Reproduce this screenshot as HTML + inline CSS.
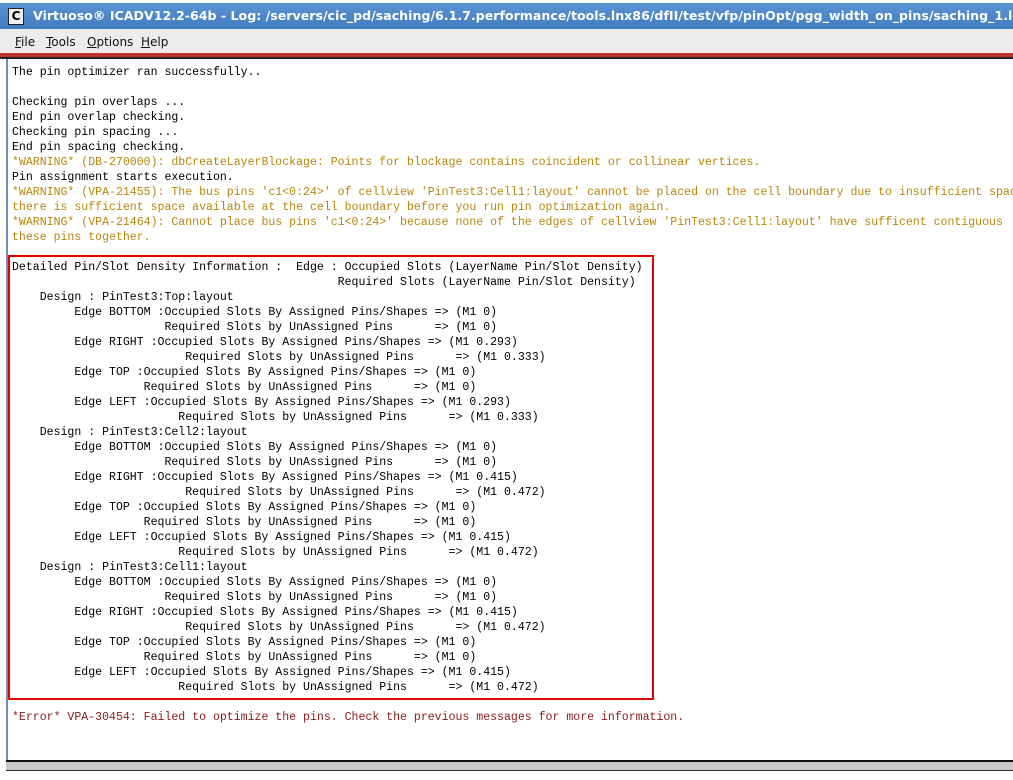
<!DOCTYPE html>
<html><head><meta charset="utf-8"><style>
html,body{margin:0;padding:0;width:1013px;height:780px;overflow:hidden;background:#fff;position:relative}
.title{position:absolute;left:0;top:3px;width:1013px;height:26px;background:linear-gradient(#5b94d2,#3f7cc0);color:#fff;font:bold 12.6px "DejaVu Sans",sans-serif;line-height:26px;white-space:nowrap;overflow:hidden}
.title .ic{position:absolute;left:8px;top:5px;width:14px;height:15px;background:#eee;border:1px solid #222;color:#000;font:bold 12px "DejaVu Sans",sans-serif;line-height:15px;text-align:center}
.title .t{position:absolute;left:33px;top:0}
.menu{position:absolute;left:0;top:29px;width:1013px;height:24px;background:#ececec;font:12px "DejaVu Sans",sans-serif;line-height:26px;color:#111}
.menu span{position:absolute;top:0}
.menu u{text-decoration:underline}
.red{position:absolute;left:0;top:53px;width:1013px;height:4px;background:#c0332a}
.blk{position:absolute;left:0;top:57px;width:1013px;height:2px;background:#222}
.lb{position:absolute;left:6px;top:59px;width:2px;height:702px;background:#6d8fb5}
.bot1{position:absolute;left:6px;top:760px;width:1007px;height:2px;background:#111}
.bot2{position:absolute;left:6px;top:762px;width:1007px;height:8px;background:#c8c8c8;border-bottom:1px solid #333}
pre{position:absolute;left:12px;top:65px;margin:0;font:11.55px "Liberation Mono",monospace;line-height:15px;white-space:pre;color:#000}
.w{color:#b8860b}.e{color:#8b1a1a}
.box{position:absolute;left:8px;top:255px;width:642px;height:441px;border:2px solid #e00000}
</style></head><body>
<div class="title"><div class="ic">C</div><div class="t">Virtuoso® ICADV12.2-64b - Log: /servers/cic_pd/saching/6.1.7.performance/tools.lnx86/dfII/test/vfp/pinOpt/pgg_width_on_pins/saching_1.log</div></div>
<div class="menu"><span style="left:15px"><u>F</u>ile</span><span style="left:46px"><u>T</u>ools</span><span style="left:87px"><u>O</u>ptions</span><span style="left:141px"><u>H</u>elp</span></div>
<div class="red"></div><div class="blk"></div><div class="lb"></div>
<div class="box"></div>
<pre>The pin optimizer ran successfully..

Checking pin overlaps ...
End pin overlap checking.
Checking pin spacing ...
End pin spacing checking.
<span class="w">*WARNING* (DB-270000): dbCreateLayerBlockage: Points for blockage contains coincident or collinear vertices.</span>
Pin assignment starts execution.
<span class="w">*WARNING* (VPA-21455): The bus pins 'c1&lt;0:24&gt;' of cellview 'PinTest3:Cell1:layout' cannot be placed on the cell boundary due to insufficient space
there is sufficient space available at the cell boundary before you run pin optimization again.
*WARNING* (VPA-21464): Cannot place bus pins 'c1&lt;0:24&gt;' because none of the edges of cellview 'PinTest3:Cell1:layout' have sufficent contiguous
these pins together.</span>

Detailed Pin/Slot Density Information :  Edge : Occupied Slots (LayerName Pin/Slot Density)
                                               Required Slots (LayerName Pin/Slot Density)
    Design : PinTest3:Top:layout
         Edge BOTTOM :Occupied Slots By Assigned Pins/Shapes =&gt; (M1 0)
                      Required Slots by UnAssigned Pins      =&gt; (M1 0)
         Edge RIGHT :Occupied Slots By Assigned Pins/Shapes =&gt; (M1 0.293)
                         Required Slots by UnAssigned Pins      =&gt; (M1 0.333)
         Edge TOP :Occupied Slots By Assigned Pins/Shapes =&gt; (M1 0)
                   Required Slots by UnAssigned Pins      =&gt; (M1 0)
         Edge LEFT :Occupied Slots By Assigned Pins/Shapes =&gt; (M1 0.293)
                        Required Slots by UnAssigned Pins      =&gt; (M1 0.333)
    Design : PinTest3:Cell2:layout
         Edge BOTTOM :Occupied Slots By Assigned Pins/Shapes =&gt; (M1 0)
                      Required Slots by UnAssigned Pins      =&gt; (M1 0)
         Edge RIGHT :Occupied Slots By Assigned Pins/Shapes =&gt; (M1 0.415)
                         Required Slots by UnAssigned Pins      =&gt; (M1 0.472)
         Edge TOP :Occupied Slots By Assigned Pins/Shapes =&gt; (M1 0)
                   Required Slots by UnAssigned Pins      =&gt; (M1 0)
         Edge LEFT :Occupied Slots By Assigned Pins/Shapes =&gt; (M1 0.415)
                        Required Slots by UnAssigned Pins      =&gt; (M1 0.472)
    Design : PinTest3:Cell1:layout
         Edge BOTTOM :Occupied Slots By Assigned Pins/Shapes =&gt; (M1 0)
                      Required Slots by UnAssigned Pins      =&gt; (M1 0)
         Edge RIGHT :Occupied Slots By Assigned Pins/Shapes =&gt; (M1 0.415)
                         Required Slots by UnAssigned Pins      =&gt; (M1 0.472)
         Edge TOP :Occupied Slots By Assigned Pins/Shapes =&gt; (M1 0)
                   Required Slots by UnAssigned Pins      =&gt; (M1 0)
         Edge LEFT :Occupied Slots By Assigned Pins/Shapes =&gt; (M1 0.415)
                        Required Slots by UnAssigned Pins      =&gt; (M1 0.472)

<span class="e">*Error* VPA-30454: Failed to optimize the pins. Check the previous messages for more information.</span></pre>
<div class="bot1"></div><div class="bot2"></div>
</body></html>
